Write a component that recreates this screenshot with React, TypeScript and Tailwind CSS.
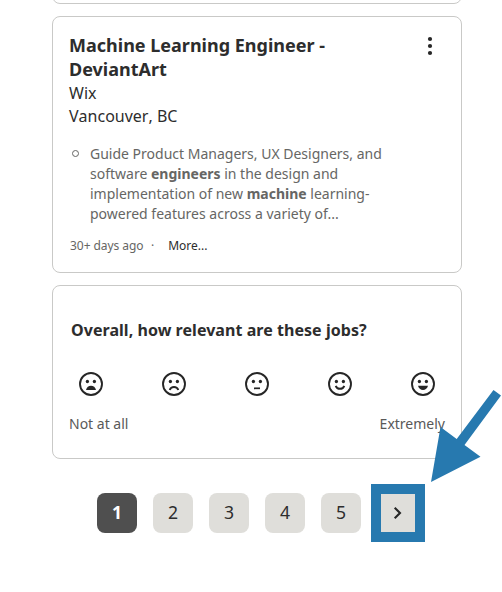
import type { ReactNode } from "react";

function Face({ children }: { children: ReactNode }) {
  return (
    <button className="flex size-11 items-center justify-center text-[#262626]">
      <svg width="24" height="24" viewBox="0 0 24 24" fill="none" stroke="currentColor" strokeWidth="1.9">
        <circle cx="12" cy="12" r="11" />
        <circle cx="8.4" cy="9.500" r="1.65" fill="currentColor" stroke="none" />
        <circle cx="15.4" cy="9.500" r="1.65" fill="currentColor" stroke="none" />
        {children}
      </svg>
    </button>
  );
}

function PageLink({ n, current = false }: { n: number; current?: boolean }) {
  return (
    <button
      className={
        current
          ? "size-10 rounded-lg bg-[#4f4f4f] pb-px text-[17.6px] font-bold text-white"
          : "size-10 rounded-lg bg-[#dfdeda] pb-px text-[17.6px] text-[#2d2d2d]"
      }
    >
      {n}
    </button>
  );
}

export default function App() {
  return (
    <div className="relative h-[592px] w-[502px] overflow-hidden bg-white pl-[52px] font-['Noto_Sans',sans-serif] text-[#2d2d2d]">
      <div className="h-1 w-[410px] overflow-hidden">
        <div className="-mt-4 h-5 rounded-lg border border-[#c9c9c7]" />
      </div>

      <article className="mt-3 h-[257px] w-[410px] rounded-lg border border-[#c9c9c7] px-4 pt-4">
        <div className="flex justify-between">
          <h2 className="w-[290px] text-[18px] leading-6 font-bold">
            Machine Learning Engineer - DeviantArt
          </h2>
          <button className="flex h-[26px] w-[30px] items-center justify-center">
            <svg width="6" height="20" viewBox="0 0 6 20" fill="#262626">
              <circle cx="3" cy="3" r="2.1" />
              <circle cx="3" cy="10" r="2.1" />
              <circle cx="3" cy="17" r="2.1" />
            </svg>
          </button>
        </div>
        <p className="mt-px text-base leading-[23px]">Wix</p>
        <p className="text-base leading-[23px] [font-kerning:none]">Vancouver, BC</p>
        <div className="mt-4 flex gap-[11px] pl-[3px] text-sm leading-5 text-[#666664]">
          <span className="mt-1.5 size-[7px] shrink-0 rounded-full border border-[#666664]" />
          <p>
            Guide Product Managers, UX Designers, and<br />
            software <b>engineers</b> in the design and<br />
            implementation of new <b>machine</b> learning-<br />
            powered features across a variety of...
          </p>
        </div>
        <div className="mt-[13px] flex pl-px text-xs leading-[18px] text-[#666664]">
          <span className="w-[74px] whitespace-nowrap tracking-[-0.05px]">30+ days ago</span>
          <span className="ml-[7px]">·</span>
          <span className="ml-[14px] text-[#2d2d2d]">More...</span>
        </div>
      </article>

      <section className="mt-3 h-[174px] w-[410px] rounded-lg border border-[#c9c9c7] px-4 pt-8">
        <h3 className="pl-0.5 text-base leading-6 font-bold tracking-[0.05px]">Overall, how relevant are these jobs?</h3>
        <div className="mt-5 flex justify-between">
          <Face>
            <path d="M7 18c.6-2.700 2.600-4.200 5-4.200s4.400 1.500 5 4.200z" fill="currentColor" stroke="none" />
          </Face>
          <Face>
            <path d="M7.700 18c.7-1.900 2.300-3 4.300-3s3.600 1.100 4.300 3" />
          </Face>
          <Face>
            <path d="M9 16.300h6" strokeWidth="1.700" />
          </Face>
          <Face>
            <path d="M7.700 13.800c.7 1.900 2.300 3 4.300 3s3.600-1.100 4.300-3" />
          </Face>
          <Face>
            <path d="M7 13.800h10c-.6 2.700-2.600 4.200-5 4.200s-4.400-1.500-5-4.200z" fill="currentColor" stroke="none" />
          </Face>
        </div>
        <div className="mt-2 flex justify-between text-sm leading-5 text-[#595959]">
          <span>Not at all</span>
          <span>Extremely</span>
        </div>
      </section>

      <nav className="mt-[25px] ml-[45px] flex items-center">
        <div className="flex gap-4">
          <PageLink n={1} current />
          <PageLink n={2} />
          <PageLink n={3} />
          <PageLink n={4} />
          <PageLink n={5} />
        </div>
        <button className="ml-[10px] flex h-[58px] w-[54px] items-center justify-center border-10 border-[#2779af] bg-[#dfdeda]">
          <svg width="12" height="14" viewBox="0 0 12 14" fill="none" stroke="#262626" strokeWidth="2.1">
            <path d="M2.700 1.700L8 7L2.700 12.300" />
          </svg>
        </button>
      </nav>

      <svg className="pointer-events-none absolute inset-0" width="502" height="592" viewBox="0 0 502 592">
        <path d="M431 482L440.500 427L456.700 439L493.500 390L501 395.500L464.500 445L480.500 456.700Z" fill="#2779af" />
      </svg>
    </div>
  );
}
